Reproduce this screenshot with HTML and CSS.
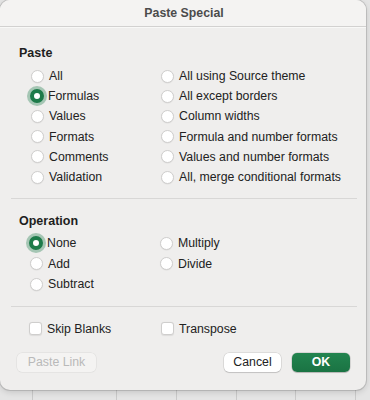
FILE: index.html
```html
<!DOCTYPE html>
<html lang="en">
<head>
    <meta charset="UTF-8">
    <title>Paste Special</title>
    <link rel="stylesheet" href="styles.css">
</head>
<body>
    <div class="dialog">
        <div class="titlebar">Paste Special</div>

        <div class="section">
            <h3>Paste</h3>
            <div class="options">
                <label class="opt"><span class="radio"></span>All</label>
                <label class="opt"><span class="radio"></span>All using Source theme</label>
                <label class="opt"><span class="radio checked"></span>Formulas</label>
                <label class="opt"><span class="radio"></span>All except borders</label>
                <label class="opt"><span class="radio"></span>Values</label>
                <label class="opt"><span class="radio"></span>Column widths</label>
                <label class="opt"><span class="radio"></span>Formats</label>
                <label class="opt"><span class="radio"></span>Formula and number formats</label>
                <label class="opt"><span class="radio"></span>Comments</label>
                <label class="opt"><span class="radio"></span>Values and number formats</label>
                <label class="opt"><span class="radio"></span>Validation</label>
                <label class="opt"><span class="radio"></span>All, merge conditional formats</label>
            </div>
        </div>

        <div class="section op">
            <h3>Operation</h3>
            <div class="options">
                <label class="opt"><span class="radio checked"></span>None</label>
                <label class="opt"><span class="radio"></span>Multiply</label>
                <label class="opt"><span class="radio"></span>Add</label>
                <label class="opt"><span class="radio"></span>Divide</label>
                <label class="opt"><span class="radio"></span>Subtract</label>
            </div>
        </div>

        <div class="section checks">
            <div class="options">
                <label class="opt"><span class="box"></span>Skip Blanks</label>
                <label class="opt"><span class="box"></span>Transpose</label>
            </div>
        </div>

        <div class="footer">
            <button class="btn disabled">Paste Link</button>
            <div class="right">
                <button class="btn">Cancel</button>
                <button class="btn primary">OK</button>
            </div>
        </div>
    </div>
</body>
</html>
```

FILE: styles.css
```css
:root {
    --green: #1d7b4a;
    --text: #222;
    --line: #d8d7d6;
}

body {
    margin: 0;
    width: 370px;
    height: 400px;
    overflow: hidden;
    font-family: 'Liberation Sans', Arial, sans-serif;
    font-size: 12.3px;
    color: var(--text);
    background-color: #e4e4e4;
    background-image:
        linear-gradient(90deg, transparent 32px, #c9c9c9 32px, #c9c9c9 33px, transparent 33px,
            transparent 116px, #c9c9c9 116px, #c9c9c9 117px, transparent 117px,
            transparent 176px, #c9c9c9 176px, #c9c9c9 177px, transparent 177px,
            transparent 236px, #c9c9c9 236px, #c9c9c9 237px, transparent 237px,
            transparent 295px, #c9c9c9 295px, #c9c9c9 296px, transparent 296px,
            transparent 355px, #c9c9c9 355px, #c9c9c9 356px, transparent 356px);
}

.dialog {
    width: 366px;
    height: 390px;
    box-sizing: border-box;
    background: #efeeed;
    border-radius: 10px;
    box-shadow: 0 0 0 1px rgba(0,0,0,0.12), 0 2px 6px rgba(0,0,0,0.15);
    display: flex;
    flex-direction: column;
    overflow: hidden;
}

.titlebar {
    height: 26px;
    line-height: 26px;
    text-align: center;
    font-weight: bold;
    color: #4b4b4b;
    background: #f4f3f2;
    border-bottom: 1px solid #d2d1d0;
    box-shadow: 0 1px 0 #f8f8f7;
    padding-left: 2px;
}

.section {
    margin: 0 9px 0 11px;
    padding: 18px 0 11px;
    border-bottom: 1px solid var(--line);
}

.section h3 {
    margin: 0 0 5px 8px;
    font-size: 12.5px;
    line-height: 16px;
    font-weight: bold;
    color: #1e1e1e;
}

.options {
    display: grid;
    grid-template-columns: 130px 1fr;
    padding-left: 20px;
}

.opt {
    display: flex;
    align-items: center;
    gap: 5px;
    height: 20.2px;
    white-space: nowrap;
}

.radio {
    width: 13px;
    height: 13px;
    border-radius: 50%;
    box-sizing: border-box;
    background: #fff;
    border: 1px solid #cfcecd;
    box-shadow: 0 0.5px 1px rgba(0,0,0,0.08);
    flex: none;
}

.radio.checked {
    width: 14px;
    height: 14px;
    margin-left: -1px;
    margin-right: -1px;
    border: 4.5px solid var(--green);
    background: #fff;
    box-shadow: 0 0 0 3px rgba(29,123,74,0.35);
}

.op {
    padding-top: 14px;
    padding-bottom: 11px;
}

.op h3 {
    margin-bottom: 4px;
}

.op .options {
    padding-left: 19px;
}

.op .opt {
    height: 20.5px;
}

.checks {
    border-bottom: none;
    padding: 12px 0 0;
}

.checks .options {
    padding-left: 18px;
    grid-template-columns: 132px 1fr;
}

.box {
    width: 13px;
    height: 13px;
    box-sizing: border-box;
    border-radius: 3px;
    background: #fff;
    border: 1px solid #cfcecd;
    box-shadow: 0 0.5px 1px rgba(0,0,0,0.08);
    flex: none;
}

.footer {
    display: flex;
    justify-content: space-between;
    padding: 14px 16px 0 17px;
}

.right {
    display: flex;
    gap: 11px;
}

.btn {
    height: 19px;
    padding: 0;
    font-family: inherit;
    font-size: 12.3px;
    color: var(--text);
    background: #fff;
    border: none;
    border-radius: 5px;
    box-shadow: 0 0 0 0.5px rgba(0,0,0,0.15), 0 1px 1px rgba(0,0,0,0.12);
    width: 57px;
}

.btn.disabled {
    width: 79px;
    color: #b9b9b9;
    background: #f4f3f2;
    box-shadow: 0 0 0 0.5px rgba(0,0,0,0.08);
}

.btn.primary {
    width: 58px;
    color: #fff;
    font-weight: bold;
    background: linear-gradient(#22844f, #1a7343);
    box-shadow: 0 0 0 0.5px rgba(0,0,0,0.2), 0 1px 1px rgba(0,0,0,0.15);
}
```
